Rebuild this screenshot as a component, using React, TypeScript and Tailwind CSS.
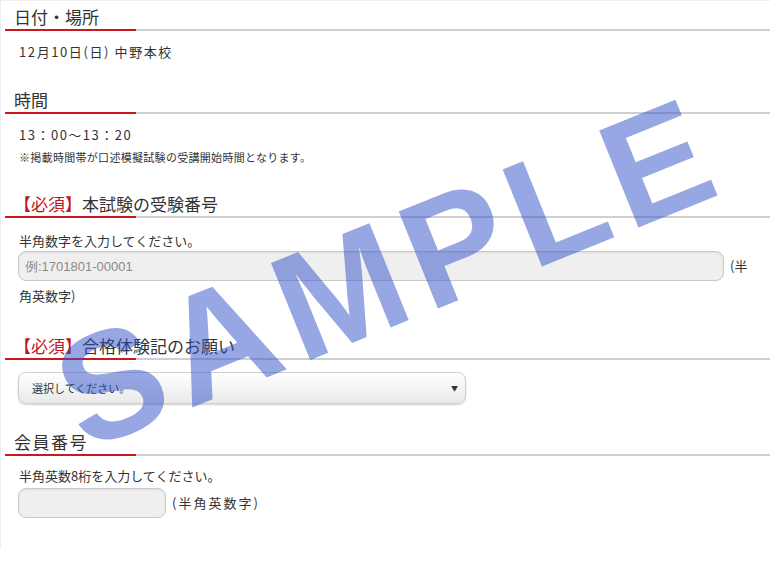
const jp = "font-['Noto_Sans_CJK_JP','Liberation_Sans',sans-serif]";

function Heading({ children }: { children: React.ReactNode }) {
  return (
    <div>
      <h2 className="pl-[13px] text-[17px] leading-[24px] text-[#333]">{children}</h2>
      {/* underline: red accent + gray rule */}
      <div className="ml-[4px] flex h-[2px]">
        <div className="w-[131px] bg-[#cc1820]" />
        <div className="flex-1 bg-[#cfcfcf]" />
      </div>
    </div>
  );
}

function Required() {
  return <span className="text-[#c4141c]">【必須】</span>;
}

export default function App() {
  return (
    <div className={`relative h-[548px] overflow-hidden border-t border-l border-[#eeeeee] bg-white ${jp}`}>

      {/* 日付・場所 */}
      <div className="pt-[4px]">
        <Heading>日付・場所</Heading>
      </div>
      <p className="mt-[11px] pl-[18px] text-[13px] leading-[20px] tracking-[1.6px] text-[#333]">12月10日(日) 中野本校</p>

      {/* 時間 */}
      <div className="mt-[26px]">
        <Heading>時間</Heading>
      </div>
      <p className="mt-[11px] pl-[18px] text-[13px] leading-[20px] tracking-[1.5px] text-[#333]">13：00〜13：20</p>
      <p className="mt-[4px] pl-[18px] text-[11px] leading-[16px] tracking-[0.3px] text-[#333]">
        ※掲載時間帯が口述模擬試験の受講開始時間となります。
      </p>

      {/* 受験番号 */}
      <div className="mt-[27px]">
        <Heading>
          <Required />本試験の受験番号
        </Heading>
      </div>
      <p className="mt-[14px] pl-[18px] text-[13px] leading-[18px] text-[#333]">半角数字を入力してください。</p>
      <div className="mt-[1px] flex items-center gap-[6px] pl-[17px]">
        <input
          type="text"
          placeholder="例:1701801-00001"
          className="h-[30px] w-[706px] rounded-[8px] border border-[#c9c9c9] bg-[#efefef] px-[6px] font-['Liberation_Sans',sans-serif] text-[13px] text-[#333] shadow-[inset_0_1px_2px_rgba(0,0,0,0.08)] outline-none placeholder:text-[#8a8a8a]"
        />
        <span className="text-[13px] text-[#333]">(半</span>
      </div>
      <p className="mt-[5px] pl-[18px] text-[13px] leading-[20px] text-[#333]">角英数字)</p>

      {/* 合格体験記 */}
      <div className="mt-[28px]">
        <Heading>
          <Required />合格体験記のお願い
        </Heading>
      </div>
      <div className="mt-[12px] pl-[17px]">
        <div className="flex h-[32px] w-[448px] items-center justify-between rounded-[8px] border border-[#cfcfcf] bg-gradient-to-b from-white to-[#e9e9e9] pr-[7px] pl-[13px] shadow-[0_1px_2px_rgba(0,0,0,0.18)]">
          <span className="text-[11px] text-[#333]">選択してください。</span>
          <span className="text-[7px] text-[#333]">▼</span>
        </div>
      </div>

      {/* 会員番号 */}
      <div className="mt-[26px]">
        <Heading>
          <span className="tracking-[1.5px]">会員番号</span>
        </Heading>
      </div>
      <p className="mt-[11px] pl-[18px] text-[13px] leading-[18px] text-[#333]">半角英数8桁を入力してください。</p>
      <div className="mt-[3px] flex items-center gap-[6px] pl-[17px]">
        <input
          type="text"
          className="h-[30px] w-[148px] rounded-[8px] border border-[#c9c9c9] bg-[#efefef] shadow-[inset_0_1px_2px_rgba(0,0,0,0.08)] outline-none"
        />
        <span className="text-[13px] tracking-[2px] text-[#333]">(半角英数字)</span>
      </div>

      {/* SAMPLE watermark */}
      <div className="pointer-events-none absolute top-[270px] left-[388px] -translate-x-1/2 -translate-y-1/2 -rotate-[22deg] font-['Liberation_Sans',sans-serif] text-[152px] leading-none font-bold tracking-[11px] whitespace-nowrap text-[rgba(45,80,200,0.5)]">
        SAMPLE
      </div>
    </div>
  );
}
